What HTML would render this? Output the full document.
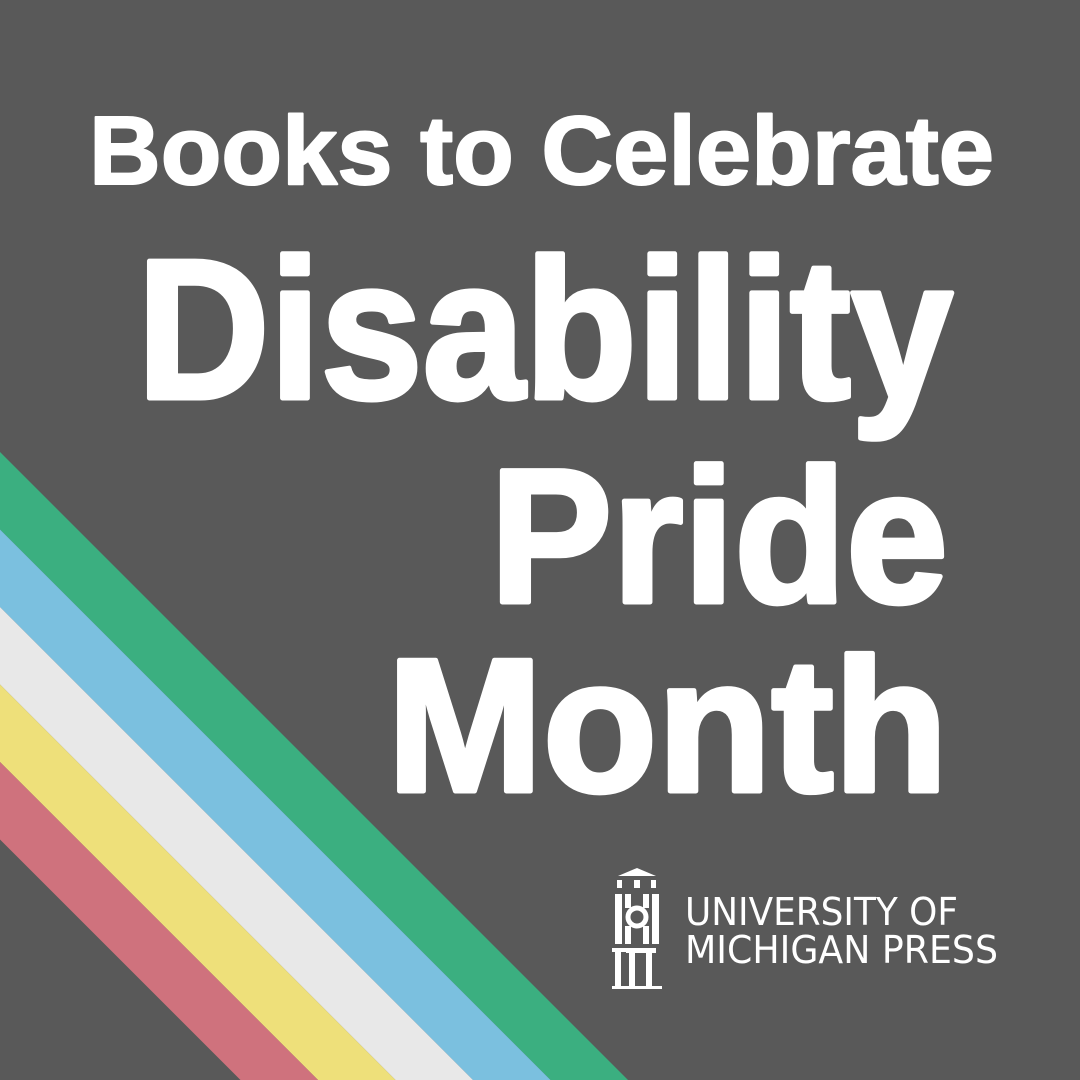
<!DOCTYPE html>
<html><head><meta charset="utf-8"><style>
html,body{margin:0;padding:0;background:#595959;}
svg{display:block}
</style></head><body>
<svg width="1080" height="1080" viewBox="0 0 1080 1080" xmlns="http://www.w3.org/2000/svg">
<rect width="1080" height="1080" fill="#595959"/>
<polygon points="0,452 628,1080 550.5,1080 0,529.5" fill="#3baf80"/>
<polygon points="0,529.5 550.5,1080 473,1080 0,607" fill="#7bc0df"/>
<polygon points="0,607 473,1080 395.5,1080 0,684.5" fill="#e8e8e8"/>
<polygon points="0,684.5 395.5,1080 318,1080 0,762" fill="#eee07a"/>
<polygon points="0,762 318,1080 240.5,1080 0,839.5" fill="#cf727d"/>
<g fill="#fff" stroke="#fff" stroke-linejoin="round" font-family="Liberation Sans, sans-serif" font-weight="bold">
<text x="89" y="184" font-size="97" stroke-width="2" textLength="905" lengthAdjust="spacingAndGlyphs">Books to Celebrate</text>
<text x="137" y="398" font-size="199" stroke-width="5" textLength="816" lengthAdjust="spacingAndGlyphs">Disability</text>
<text x="490" y="602" font-size="191" stroke-width="5" textLength="458" lengthAdjust="spacingAndGlyphs">Pride</text>
<text x="387" y="791" font-size="190" stroke-width="5" textLength="561" lengthAdjust="spacingAndGlyphs">Month</text>
</g>
<g fill="#fff" font-family="DejaVu Sans, Liberation Sans, sans-serif" font-weight="normal">
<text x="685" y="925" font-size="38" textLength="273" lengthAdjust="spacingAndGlyphs">UNIVERSITY OF</text>
<text x="685" y="963" font-size="38" textLength="313" lengthAdjust="spacingAndGlyphs">MICHIGAN PRESS</text>
</g>
<g fill="#fff">
<polygon points="618,876 637,868 656,876"/>
<rect x="617" y="880" width="5" height="8"/><rect x="634" y="880" width="6" height="8"/><rect x="651" y="880" width="5" height="8"/>
<rect x="615" y="894" width="7" height="50"/><rect x="652" y="894" width="7" height="50"/>
<rect x="625" y="894" width="6" height="14"/><rect x="643" y="894" width="6" height="14"/>
<circle cx="637" cy="917" r="9" fill="none" stroke="#fff" stroke-width="5"/>
<rect x="625" y="926" width="6" height="18"/><rect x="643" y="926" width="6" height="18"/>
<rect x="612" y="948" width="14" height="4"/><rect x="615" y="948" width="6" height="40"/>
<rect x="626" y="948" width="30" height="5"/>
<rect x="629" y="950" width="6" height="38"/><rect x="646" y="950" width="6" height="38"/>
<rect x="612" y="986" width="50" height="3"/>
</g>
</svg>
</body></html>
